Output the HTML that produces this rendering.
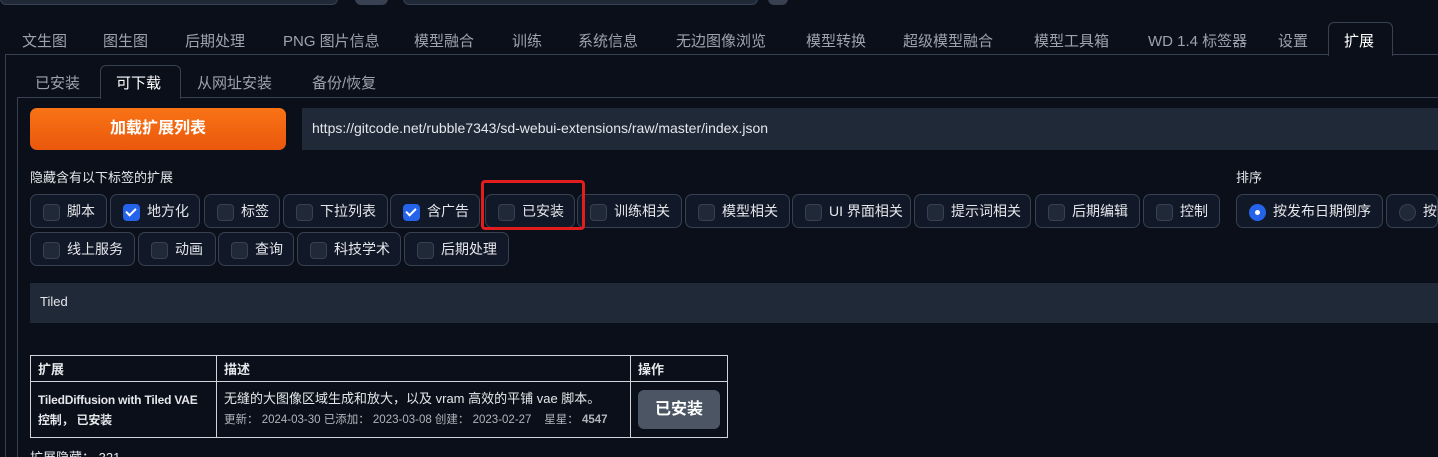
<!DOCTYPE html>
<html><head><meta charset="utf-8"><style>
*{box-sizing:border-box;margin:0;padding:0}
html{width:1438px;height:457px;overflow:hidden;background:#0b0f19}
body{width:1438px;height:457px;overflow:hidden;background:#0b0f19;font-family:"Liberation Sans","Noto Sans CJK SC",sans-serif;color:#e5e7eb;position:relative;font-size:14px}
.a{position:absolute;white-space:nowrap}
.tab{position:absolute;top:30px;font-size:15px;color:#9ca3af}
.chip{position:absolute;height:34px;border:1px solid #374151;border-radius:7px;background:#111827;font-size:14px;color:#e5e7eb;line-height:32px;padding-left:36px;white-space:nowrap;overflow:hidden}
.chip:before{content:"";position:absolute;left:12px;top:9px;width:15px;height:15px;border:1px solid #374151;border-radius:4px;background:#1f2937}
.chip.c:before{background:#2563eb;border-color:#2563eb}
.chip.c:after{content:"";position:absolute;left:17px;top:11px;width:4px;height:8px;border:solid #fff;border-width:0 2px 2px 0;transform:rotate(45deg)}
.chip.r:before{border-radius:50%}
.chip.rc:before{background:#2563eb;border-color:#2563eb}
.chip.rc:after{content:"";position:absolute;left:18px;top:15px;width:5px;height:5px;border-radius:50%;background:#fff}
table{position:absolute;left:30px;top:355px;border-collapse:collapse;font-size:13px}
td,th{border:1px solid #d1d5db;padding:0 7px;text-align:left;vertical-align:middle}
</style></head><body>
<div class="a" style="left:0;top:-10px;width:338px;height:15px;border:1px solid #374151;border-radius:6px;background:#1f2937"></div>
<div class="a" style="left:355px;top:-10px;width:33px;height:15px;border-radius:6px;background:#374151"></div>
<div class="a" style="left:403px;top:-10px;width:355px;height:15px;border:1px solid #374151;border-radius:6px;background:#1f2937"></div>
<div class="a" style="left:768px;top:-10px;width:20px;height:15px;border-radius:6px;background:#374151"></div>

<div class="tab" style="left:22px">文生图</div>
<div class="tab" style="left:103px">图生图</div>
<div class="tab" style="left:185px">后期处理</div>
<div class="tab" style="left:283px">PNG 图片信息</div>
<div class="tab" style="left:414px">模型融合</div>
<div class="tab" style="left:512px">训练</div>
<div class="tab" style="left:578px">系统信息</div>
<div class="tab" style="left:676px">无边图像浏览</div>
<div class="tab" style="left:806px">模型转换</div>
<div class="tab" style="left:903px">超级模型融合</div>
<div class="tab" style="left:1034px">模型工具箱</div>
<div class="tab" style="left:1148px">WD 1.4 标签器</div>
<div class="tab" style="left:1278px">设置</div>
<div class="a" style="left:1328px;top:22px;width:65px;height:34px;border:1px solid #374151;border-bottom:none;border-radius:6px 6px 0 0;background:#0b0f19;z-index:2"></div>
<div class="tab" style="left:1344px;color:#fff;z-index:3">扩展</div>
<div class="a" style="left:5px;top:54px;width:1433px;height:403px;border-top:1px solid #374151;border-left:1px solid #374151"></div>

<div class="a" style="left:35px;top:72px;font-size:15px;color:#9ca3af">已安装</div>
<div class="a" style="left:100px;top:65px;width:81px;height:34px;border:1px solid #374151;border-bottom:none;border-radius:6px 6px 0 0;background:#0b0f19;z-index:2"></div>
<div class="a" style="left:116px;top:72px;font-size:15px;color:#fff;z-index:3">可下载</div>
<div class="a" style="left:197px;top:72px;font-size:15px;color:#9ca3af">从网址安装</div>
<div class="a" style="left:312px;top:72px;font-size:15px;color:#9ca3af">备份/恢复</div>
<div class="a" style="left:17px;top:97px;width:1421px;height:360px;border-top:1px solid #374151;border-left:1px solid #374151"></div>

<div class="a" style="left:30px;top:108px;width:256px;height:42px;border-radius:7px;background:linear-gradient(#f97316,#ea580c);color:#fff;font-size:16px;font-weight:bold;text-align:center;line-height:42px">加载扩展列表</div>
<div class="a" style="left:302px;top:108px;width:1136px;height:42px;background:#1f2937;color:#e5e7eb;font-size:14px;line-height:40px;padding-left:10px">https://gitcode.net/rubble7343/sd-webui-extensions/raw/master/index.json</div>

<div class="a" style="left:30px;top:167px;font-size:13px;color:#e5e7eb">隐藏含有以下标签的扩展</div>
<div class="a" style="left:1236px;top:167px;font-size:13px;color:#e5e7eb">排序</div>

<div class="chip" style="left:30px;top:194px;width:77px">脚本</div>
<div class="chip c" style="left:110px;top:194px;width:90px">地方化</div>
<div class="chip" style="left:204px;top:194px;width:76px">标签</div>
<div class="chip" style="left:283px;top:194px;width:105px">下拉列表</div>
<div class="chip c" style="left:390px;top:194px;width:90px">含广告</div>
<div class="chip" style="left:485px;top:194px;width:90px">已安装</div>
<div class="chip" style="left:577px;top:194px;width:105px">训练相关</div>
<div class="chip" style="left:685px;top:194px;width:105px">模型相关</div>
<div class="chip" style="left:792px;top:194px;width:119px">UI 界面相关</div>
<div class="chip" style="left:914px;top:194px;width:117px">提示词相关</div>
<div class="chip" style="left:1035px;top:194px;width:105px">后期编辑</div>
<div class="chip" style="left:1143px;top:194px;width:77px">控制</div>
<div class="chip r rc" style="left:1236px;top:194px;width:147px">按发布日期倒序</div>
<div class="chip r" style="left:1386px;top:194px;width:52px">按</div>

<div class="chip" style="left:30px;top:232px;width:105px">线上服务</div>
<div class="chip" style="left:138px;top:232px;width:78px">动画</div>
<div class="chip" style="left:218px;top:232px;width:76px">查询</div>
<div class="chip" style="left:297px;top:232px;width:104px">科技学术</div>
<div class="chip" style="left:404px;top:232px;width:105px">后期处理</div>

<div class="a" style="left:481px;top:180px;width:104px;height:50px;border:3px solid #e11d1d;border-radius:4px;z-index:5"></div>

<div class="a" style="left:30px;top:283px;width:1408px;height:40px;background:#1f2937;font-size:13px;line-height:38px;padding-left:10px">Tiled</div>

<table>
<tr style="height:26px;font-weight:bold"><th style="width:186px">扩展</th><th style="width:414px">描述</th><th style="width:97px">操作</th></tr>
<tr style="height:56px">
<td style="font-weight:bold;line-height:20px;font-size:12px;white-space:nowrap;letter-spacing:-0.2px">TiledDiffusion with Tiled VAE<br>控制， 已安装</td>
<td style="line-height:20px;font-size:13px;white-space:nowrap">无缝的大图像区域生成和放大，以及 vram 高效的平铺 vae 脚本。<br><span style="font-size:11.5px;color:#b0b5bd">更新： 2024-03-30 已添加： 2023-03-08 创建： 2023-02-27 &nbsp;&nbsp; 星星： <b>4547</b></span></td>
<td><div style="width:82px;height:39px;background:#4b5563;border-radius:6px;color:#fff;font-size:16px;font-weight:bold;text-align:center;line-height:39px">已安装</div></td>
</tr>
</table>
<div class="a" style="left:30px;top:447px;font-size:13px">扩展隐藏： 321</div>
</body></html>
